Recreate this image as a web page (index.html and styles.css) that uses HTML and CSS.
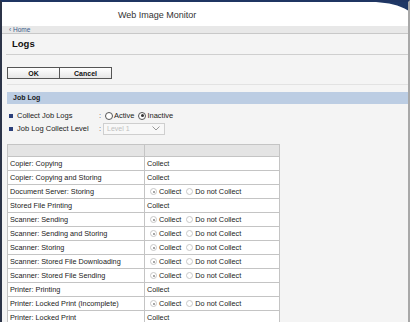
FILE: index.html
```html
<!DOCTYPE html>
<html lang="en">
<head>
    <meta charset="UTF-8">
    <meta name="viewport" content="width=device-width, initial-scale=1.0">
    <title>Web Image Monitor - Logs</title>
    <link rel="stylesheet" href="styles.css">
</head>
<body>
    <div class="frame">
        <div class="header">
            <span class="brand">Web Image Monitor</span>
            <svg class="corner" width="34" height="10" viewBox="0 0 34 10">
                <path d="M0 0 H34 V10 C25 3 13 1 0 0 Z" fill="#1f3866"/>
            </svg>
        </div>
        <div class="crumb"><a href="#">&#8249; Home</a></div>

        <div class="main">
            <div class="page-title">Logs</div>

            <div class="buttons">
                <button type="button">OK</button>
                <button type="button">Cancel</button>
            </div>

            <div class="section-bar">Job Log</div>

            <div class="settings">
                <div class="setting">
                    <span class="bullet"></span>
                    <span class="setting-label">Collect Job Logs</span>
                    <span class="colon">:</span>
                    <span class="big-radio"></span><span class="opt">Active</span>
                    <span class="big-radio checked"></span><span class="opt">Inactive</span>
                </div>
                <div class="setting">
                    <span class="bullet"></span>
                    <span class="setting-label">Job Log Collect Level</span>
                    <span class="colon">:</span>
                    <div class="select">
                        <span>Level 1</span>
                        <svg width="8" height="5" viewBox="0 0 8 5"><path d="M0.5 0.5 L4 4 L7.5 0.5" fill="none" stroke="#999" stroke-width="1"/></svg>
                    </div>
                </div>
            </div>

            <table class="log-table">
                <tr class="head"><th></th><th></th></tr>
                <tr><td>Copier: Copying</td><td>Collect</td></tr>
                <tr><td>Copier: Copying and Storing</td><td>Collect</td></tr>
                <tr><td>Document Server: Storing</td><td class="choice"><span class="radio checked"></span>Collect <span class="radio"></span>Do not Collect</td></tr>
                <tr><td>Stored File Printing</td><td>Collect</td></tr>
                <tr><td>Scanner: Sending</td><td class="choice"><span class="radio checked"></span>Collect <span class="radio"></span>Do not Collect</td></tr>
                <tr><td>Scanner: Sending and Storing</td><td class="choice"><span class="radio checked"></span>Collect <span class="radio"></span>Do not Collect</td></tr>
                <tr><td>Scanner: Storing</td><td class="choice"><span class="radio checked"></span>Collect <span class="radio"></span>Do not Collect</td></tr>
                <tr><td>Scanner: Stored File Downloading</td><td class="choice"><span class="radio checked"></span>Collect <span class="radio"></span>Do not Collect</td></tr>
                <tr><td>Scanner: Stored File Sending</td><td class="choice"><span class="radio checked"></span>Collect <span class="radio"></span>Do not Collect</td></tr>
                <tr><td>Printer: Printing</td><td>Collect</td></tr>
                <tr><td>Printer: Locked Print (Incomplete)</td><td class="choice"><span class="radio checked"></span>Collect <span class="radio"></span>Do not Collect</td></tr>
                <tr><td>Printer: Locked Print</td><td>Collect</td></tr>
            </table>
        </div>
    </div>
</body>
</html>
```

FILE: styles.css
```css
body {
    margin: 0;
    font-family: "Liberation Sans", Arial, sans-serif;
    color: #222;
    overflow: hidden;
}
.frame {
    position: relative;
    height: 322px;
    box-sizing: border-box;
    border-top: 2px solid #1f3562;
    border-left: 2px solid #2c3448;
    border-right: 2px solid #a8a8a8;
    background: #f4f4f4;
    overflow: hidden;
}
.header {
    height: 24px;
    background: #fff;
    display: flex;
    align-items: center;
    padding-left: 116px;
}
.brand {
    font-size: 9px;
    color: #333;
    margin-top: 2px;
}
.corner {
    position: absolute;
    top: 0;
    right: -2px;
}
.crumb {
    height: 7px;
    background: #e8e8e8;
    border-bottom: 1px solid #c8c8c8;
    padding-left: 7px;
    font-size: 6.5px;
    line-height: 7px;
}
.crumb a {
    color: #3a5a8a;
    text-decoration: none;
}
.main {
    padding-left: 4px;
}
.page-title {
    height: 20px;
    border-bottom: 1px solid #cfcfcf;
    padding-left: 6px;
    font-size: 9.5px;
    font-weight: bold;
    line-height: 20px;
    color: #111;
}
.buttons {
    display: flex;
    margin-top: 12px;
    margin-left: 1px;
    padding-bottom: 5px;
    border-bottom: 1px solid #e2e2e2;
}
.buttons button {
    height: 12px;
    width: 53px;
    padding: 0;
    margin: 0 -1px 0 0;
    border: 1px solid #555;
    background: linear-gradient(#ffffff, #e6e6e6);
    font-family: "Liberation Sans", Arial, sans-serif;
    font-size: 7px;
    font-weight: bold;
    color: #111;
}
.section-bar {
    margin: 7px 0 0 1px;
    height: 12px;
    background: #bccde3;
    padding-left: 6px;
    font-size: 7px;
    font-weight: bold;
    line-height: 12px;
    color: #1a1a1a;
}
.settings {
    margin-top: 5px;
}
.setting {
    display: flex;
    align-items: center;
    height: 13px;
    margin-left: 3px;
    font-size: 7.5px;
}
.bullet {
    width: 4px;
    height: 4px;
    background: #2b3f7a;
    margin-right: 4px;
}
.setting-label {
    width: 82px;
}
.colon {
    width: 6px;
    color: #555;
}
.big-radio {
    width: 6px;
    height: 6px;
    border: 1px solid #555;
    border-radius: 50%;
    background: #fff;
    margin-right: 1px;
    position: relative;
}
.big-radio.checked::after {
    content: "";
    position: absolute;
    left: 1.5px;
    top: 1.5px;
    width: 3px;
    height: 3px;
    border-radius: 50%;
    background: #333;
}
.opt {
    margin-right: 4px;
}
.select {
    box-sizing: border-box;
    width: 62px;
    height: 12px;
    margin-left: -2px;
    border: 1px solid #cfcfcf;
    background: #f8f8f8;
    display: flex;
    align-items: center;
    justify-content: space-between;
    padding: 0 4px 0 3px;
    color: #c0c0c0;
    font-size: 7px;
}
.log-table {
    margin: 9px 0 0 1px;
    border-collapse: collapse;
    width: 273px;
    font-size: 7.3px;
    background: #fff;
}
.log-table th,
.log-table td {
    border: 1px solid #c4c4c4;
    padding: 0 0 0 2px;
    height: 13px;
    text-align: left;
    white-space: nowrap;
}
.log-table td:first-child {
    width: 134px;
}
.log-table .head th {
    background: #e4e4e4;
    height: 11px;
}
.radio {
    display: inline-block;
    width: 5px;
    height: 5px;
    border: 1px solid #c8c8c8;
    border-radius: 50%;
    background: #fff;
    vertical-align: -1px;
    margin: 0 2px 0 3px;
    position: relative;
}
.radio.checked::after {
    content: "";
    position: absolute;
    left: 1.5px;
    top: 1.5px;
    width: 2px;
    height: 2px;
    border-radius: 50%;
    background: #888;
}
```
